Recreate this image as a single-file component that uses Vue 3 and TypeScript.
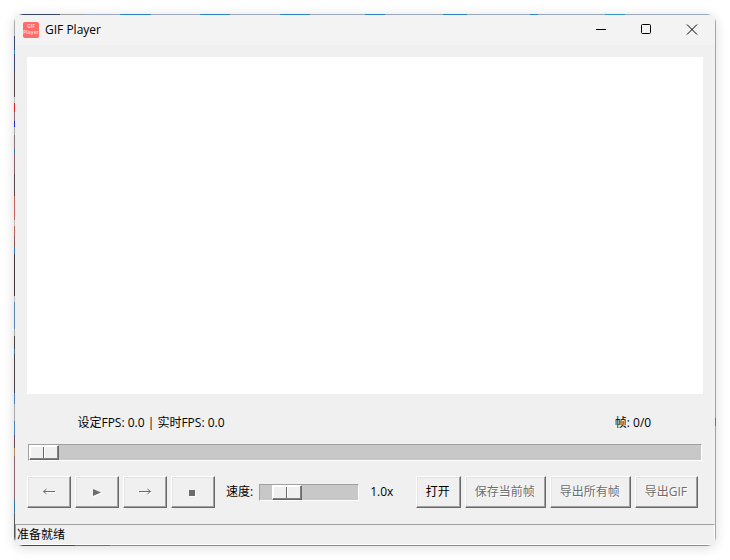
<script setup lang="ts">
import { computed, ref } from 'vue'

const frame = ref(0)
const totalFrames = ref(0)
const speed = ref(1)
const setFps = ref(0)
const liveFps = ref(0)
const status = ref('准备就绪')

const speedText = computed(() => `${Number(speed.value).toFixed(1)}x`)
const fpsText = computed(
  () => `设定FPS: ${setFps.value.toFixed(1)} | 实时FPS: ${liveFps.value.toFixed(1)}`,
)

interface Transport {
  label: string
  path: string
  filled: boolean
}

const transport: Transport[] = [
  { label: '上一帧', path: 'M14 7.5H2.5M5.5 5L2.5 7.5L5.5 10', filled: false },
  { label: '播放', path: 'M4 5L12 8.5L4 12Z', filled: true },
  { label: '下一帧', path: 'M2 7.5H13.5M10.5 5L13.5 7.5L10.5 10', filled: false },
  { label: '停止', path: 'M4 6H10V12H4Z', filled: true },
]

const actions = [
  { text: '打开', enabled: true },
  { text: '保存当前帧', enabled: false },
  { text: '导出所有帧', enabled: false },
  { text: '导出GIF', enabled: false },
]
</script>

<template>
  <div class="desktop">
    <div class="edge">
      <main class="window">
        <header class="titlebar">
          <svg class="logo" viewBox="0 0 16 16" aria-hidden="true">
            <rect width="16" height="16" rx="2" fill="#ff6b66" />
            <text x="8" y="6" text-anchor="middle">GIF</text>
            <text x="8" y="12" text-anchor="middle">Player</text>
          </svg>
          <h1>GIF Player</h1>
          <div class="caption">
            <button type="button" aria-label="最小化">
              <svg viewBox="0 0 12 12"><path d="M2 5.5H12" /></svg>
            </button>
            <button type="button" aria-label="最大化">
              <svg viewBox="0 0 12 12"><rect x="1.5" y="0.5" width="9" height="9" rx="1" /></svg>
            </button>
            <button type="button" aria-label="关闭">
              <svg viewBox="0 0 12 12"><path d="M1 0.5L11 10.5M11 0.5L1 10.5" /></svg>
            </button>
          </div>
        </header>

        <section class="content">
          <div class="stage"></div>
          <div class="info">
            <span class="fps">{{ fpsText }}</span>
            <span class="count">帧: {{ frame }}/{{ totalFrames }}</span>
          </div>
          <input
            v-model.number="frame"
            class="slider seek"
            type="range"
            min="0"
            max="100"
            aria-label="帧"
          />
          <div class="controls">
            <div class="group">
              <button
                v-for="t in transport"
                :key="t.label"
                class="btn icon"
                type="button"
                :aria-label="t.label"
                disabled
              >
                <svg viewBox="0 0 16 16" :class="{ filled: t.filled }"><path :d="t.path" /></svg>
              </button>
            </div>
            <label class="speed-label" for="speed">速度:</label>
            <input
              id="speed"
              v-model.number="speed"
              class="slider speed"
              type="range"
              min="0.1"
              max="5.2"
              step="0.1"
            />
            <output class="speed-value" for="speed">{{ speedText }}</output>
            <div class="group actions">
              <button
                v-for="a in actions"
                :key="a.text"
                class="btn"
                type="button"
                :disabled="!a.enabled"
              >
                {{ a.text }}
              </button>
            </div>
          </div>
        </section>

        <footer class="status">{{ status }}</footer>
      </main>
    </div>
  </div>
</template>

<style>
body {
  background: #fff;
}
</style>

<style scoped>
* {
  box-sizing: border-box;
}

.desktop {
  display: flex;
  min-height: 100vh;
  padding: 14px;
  font: 12px/16px 'Open Sans', 'Noto Sans CJK SC', sans-serif;
  color: #000;
}

.edge {
  flex: 1;
  display: flex;
  min-width: 0;
  padding: 1px;
  border-radius: 9px;
  box-shadow: 0 2px 12px rgba(0, 0, 0, 0.14);
  background:
    linear-gradient(90deg, #3b4570 46px, #a0a09c 46px 70px, #9aa7be 70px 106px, #2d86bb 106px 137px, #9aa7be 137px 186px, #2d86bb 186px 216px, #9aa7be 216px 266px, #2d86bb 266px 296px, #9aa7be 296px 351px, #2d86bb 351px 371px, #9aa7be 371px 429px, #2d86bb 429px 453px, #9aa7be 453px 516px, #2d86bb 516px 524px, #9aa7be 524px 591px, #3098bc 591px 611px, #9aa7be 611px) 0 0 / 100% 1px no-repeat,
    linear-gradient(90deg, #56414c 61px, #4a7d98 61px 96px, #8c8c8c 96px) 0 100% / 100% 1px no-repeat,
    linear-gradient(#aaa 22px, #3b4570 22px 36px, #2d86bb 36px 40px, #3b4570 40px 58px, #584850 58px 83px, #bbb 83px 89px, #dd2222 89px 98px, #916e7b 98px 107px, #2626cc 107px 113px, #aaa 113px 121px, #85707d 121px 135px, #2d77ad 135px 140px, #85606b 140px 160px, #5b4450 160px 182px, #c0625a 182px 206px, #bbb 206px 212px, #c0625a 212px 222px, #8c5a50 222px 234px, #2d77ad 234px 240px, #44383f 240px 282px, #bbb 282px 288px, #6286b4 288px 315px, #aaa 315px 322px, #4a4345 322px 335px, #2d77ad 335px 340px, #4a4345 340px 379px, #4a80b5 379px 390px, #aaa 390px 407px, #4a80b5 407px 421px, #6b4a55 421px 434px, #b9905c 434px 442px, #8a6570 442px 485px, #39769a 485px 500px, #555 500px) 0 0 / 1px 100% no-repeat,
    linear-gradient(#9aa7be 52px, #a5a5a5 52px 404px, #60804d 404px 412px, #a5a5a5 412px) 100% 0 / 1px 100% no-repeat,
    #f0f0f0;
}

.window {
  flex: 1;
  display: flex;
  flex-direction: column;
  min-width: 0;
  overflow: hidden;
  border-radius: 8px;
  background: #f0f0f0;
}

.titlebar {
  display: flex;
  align-items: center;
  height: 30px;
  padding-left: 8px;
  background: #f3f3f3;
}

.logo {
  width: 16px;
  height: 16px;
  margin-right: 6px;
}

.logo text {
  font: bold 5px 'Open Sans', sans-serif;
  fill: #ffd0cc;
}

h1 {
  margin: 0;
  font-size: 12px;
  font-weight: 400;
}

.caption {
  display: flex;
  margin-left: auto;
}

.caption button {
  display: grid;
  place-items: center;
  width: 46px;
  height: 30px;
  padding: 0;
  border: 0;
  background: none;
}

.caption svg {
  width: 12px;
  height: 12px;
  fill: none;
  stroke: #000;
}

.content {
  flex: 1;
  display: flex;
  flex-direction: column;
  padding: 12px 12px 16px;
}

.stage {
  flex: 1;
  min-height: 120px;
  background: #fff;
}

.info {
  display: flex;
  justify-content: space-between;
  padding: 21px 0 13px;
  text-align: center;
}

.fps {
  width: 248px;
}

.count {
  width: 140px;
}

.slider {
  appearance: none;
  display: block;
  height: 17px;
  margin: 0;
  border: 1px solid;
  border-color: #a0a0a0 #fff #fff #a0a0a0;
  background: #c8c8c8;
}

.slider::-webkit-slider-thumb {
  appearance: none;
  width: 30px;
  height: 15px;
  border: 1px solid;
  border-color: #fff #696969 #696969 #fff;
  background:
    linear-gradient(#696969, #696969) 13px 0 / 1px 100% no-repeat,
    linear-gradient(#fff, #fff) 14px 0 / 1px 100% no-repeat,
    #f0f0f0;
  box-shadow: inset -1px -1px #808080, inset 1px 1px #fff;
}

.seek {
  margin: 0 1px;
}

.controls {
  display: flex;
  align-items: center;
  padding: 15px 5px 0 0;
  white-space: nowrap;
}

.group {
  display: flex;
  gap: 4px;
}

.btn {
  height: 32px;
  padding: 0 10px 0 9px;
  border: 1px solid;
  border-color: #fff #696969 #696969 #fff;
  background: #f0f0f0;
  box-shadow: inset -1px -1px #a0a0a0, inset 1px 1px #e3e3e3;
  font: inherit;
  color: #000;
}

.btn:disabled {
  color: #6d6d6d;
  text-shadow: 1px 1px #fff;
}

.icon {
  display: grid;
  place-items: center;
  width: 44px;
  padding: 0;
}

.icon svg {
  width: 16px;
  height: 16px;
  fill: none;
  stroke: #6d6d6d;
  filter: drop-shadow(1px 1px 0 #fff);
}

.icon svg.filled {
  fill: #6d6d6d;
  stroke: none;
}

.speed-label {
  margin: 0 6px 0 11px;
}

.speed {
  width: 100px;
}

.speed-value {
  margin-left: 11px;
}

.actions {
  margin-left: auto;
}

.status {
  height: 21px;
  padding: 2px 1px;
  border: 1px solid;
  border-color: #a0a0a0 #fff #fff #a0a0a0;
}
</style>
